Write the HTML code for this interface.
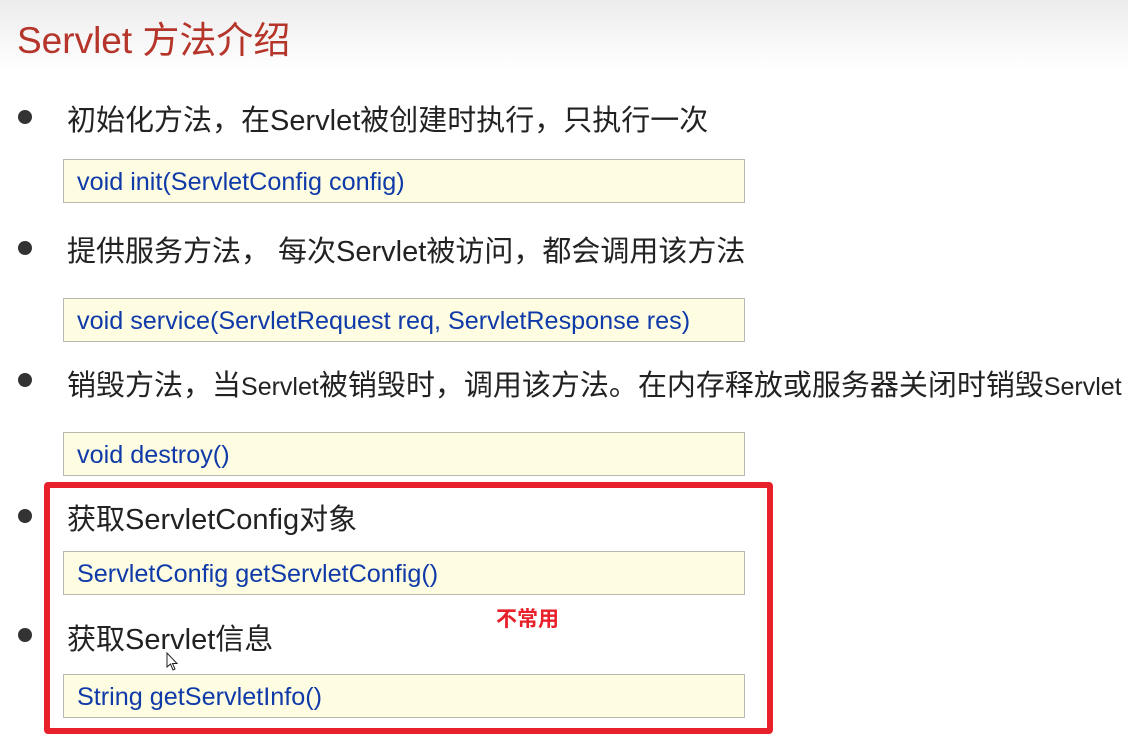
<!DOCTYPE html>
<html><head><meta charset="utf-8"><style>
body{margin:0;width:1128px;height:735px;overflow:hidden;background:linear-gradient(#ececec 0,#fff 70px,#fff);font-family:"Liberation Sans","Noto Sans CJK SC",sans-serif;position:relative}
.a{position:absolute;white-space:nowrap}
.t{left:17px;top:10px;font-size:37px;color:#b5352a}
.dot{width:14px;height:14px;border-radius:50%;background:#333}
.b{left:67px;font-size:29px;color:#222}
.box{position:absolute;left:63px;width:682px;height:44px;background:#fefde2;border:1px solid #b8b8b0;box-sizing:border-box}
.box span{position:absolute;left:13px;top:8px;font-size:25.2px;color:#0f3aa8}
.red{left:44px;top:482px;width:729px;height:252px;border:6px solid #e8202a;border-radius:4px;box-sizing:border-box}
</style></head><body>
<div class="a t">Servlet 方法介绍</div>
<div class="a dot" style="left:18px;top:110px"></div>
<div class="a b" style="top:97px">初始化方法，在Servlet被创建时执行，只执行一次</div>
<div class="box" style="top:159px"><span>void init(ServletConfig config)</span></div>
<div class="a dot" style="left:18px;top:241px"></div>
<div class="a b" style="top:228px">提供服务方法， 每次Servlet被访问，都会调用该方法</div>
<div class="box" style="top:298px"><span>void service(ServletRequest req, ServletResponse res)</span></div>
<div class="a dot" style="left:18px;top:373px"></div>
<div class="a b" style="top:362px">销毁方法，当<span style="font-size:25px">Servlet</span>被销毁时，调用该方法。在内存释放或服务器关闭时销毁<span style="font-size:25px">Servlet</span></div>
<div class="box" style="top:432px"><span>void destroy()</span></div>
<div class="a dot" style="left:18px;top:509px"></div>
<div class="a b" style="top:496px">获取ServletConfig对象</div>
<div class="box" style="top:551px"><span>ServletConfig getServletConfig()</span></div>
<div class="a dot" style="left:18px;top:628px"></div>
<div class="a b" style="top:616px">获取Servlet信息</div>
<div class="box" style="top:674px"><span>String getServletInfo()</span></div>
<div class="a" style="left:496px;top:603px;font-size:21px;font-weight:bold;color:#e8202a">不常用</div>
<div class="a red"></div>
<svg class="a" style="left:166px;top:652px" width="14" height="20" viewBox="0 0 14 20"><path d="M1 1 L1 15 L4.5 12 L7 18 L9 17 L6.5 11.5 L11 11.5 Z" fill="#fff" stroke="#222" stroke-width="1"/></svg>
</body></html>
